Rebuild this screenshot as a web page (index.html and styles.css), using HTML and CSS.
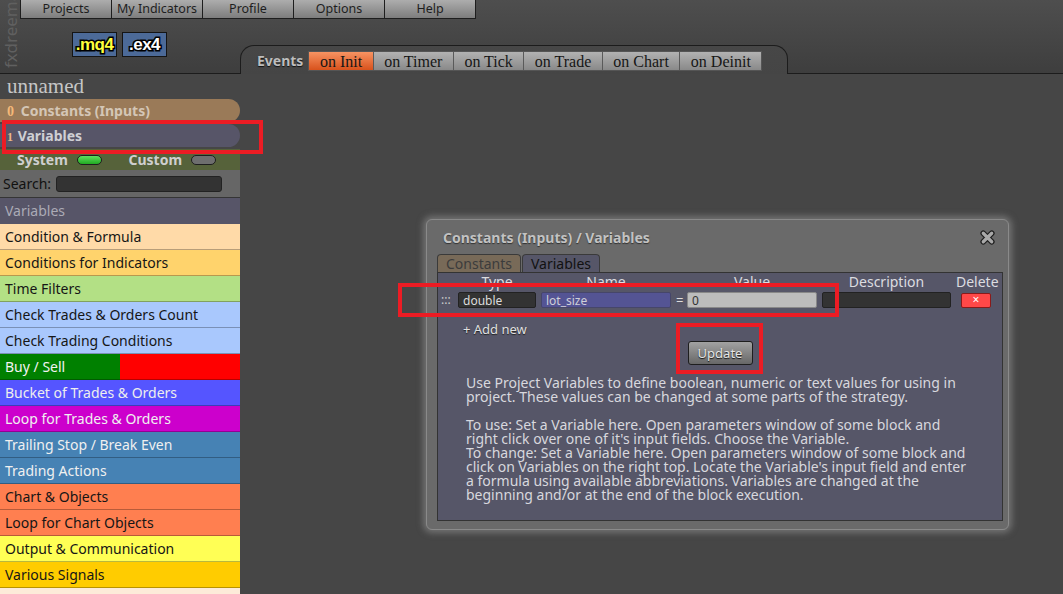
FILE: index.html
```html
<!DOCTYPE html>
<html lang="en">
<head>
    <meta charset="UTF-8">
    <title>fxDreema - unnamed</title>
    <link rel="stylesheet" href="styles.css">
</head>
<body>
    <header class="topbar">
        <div class="logo">fxdreema</div>
        <div class="topbar-main">
            <nav class="menu">
                <div class="menu-item">Projects</div>
                <div class="menu-item">My Indicators</div>
                <div class="menu-item">Profile</div>
                <div class="menu-item">Options</div>
                <div class="menu-item">Help</div>
            </nav>
            <div class="toolbar">
                <div class="exports">
                    <span class="export export-mq4">.mq4</span>
                    <span class="export export-ex4">.ex4</span>
                </div>
                <div class="events">
                    <span class="events-label">Events</span>
                    <div class="event-tabs">
                        <span class="event-tab active">on Init</span>
                        <span class="event-tab">on Timer</span>
                        <span class="event-tab">on Tick</span>
                        <span class="event-tab">on Trade</span>
                        <span class="event-tab">on Chart</span>
                        <span class="event-tab">on Deinit</span>
                    </div>
                </div>
            </div>
        </div>
    </header>

    <div class="workspace">
        <aside class="sidebar">
            <div class="project-name">unnamed</div>
            <div class="pill pill-constants"><span class="pill-count">0</span> Constants (Inputs)</div>
            <div class="pill pill-variables"><span class="pill-count">1</span> Variables</div>
            <div class="filter-row">
                <span class="filter">System <span class="toggle on"></span></span>
                <span class="filter">Custom <span class="toggle"></span></span>
            </div>
            <div class="search-row">
                <span>Search:</span>
                <span class="search-box"></span>
            </div>
            <div class="group-head">Variables</div>
            <ul class="blocks">
                <li class="block b-formula">Condition &amp; Formula</li>
                <li class="block b-indicators">Conditions for Indicators</li>
                <li class="block b-time">Time Filters</li>
                <li class="block b-check">Check Trades &amp; Orders Count</li>
                <li class="block b-check">Check Trading Conditions</li>
                <li class="block b-buysell">Buy / Sell</li>
                <li class="block b-bucket">Bucket of Trades &amp; Orders</li>
                <li class="block b-loop">Loop for Trades &amp; Orders</li>
                <li class="block b-steel">Trailing Stop / Break Even</li>
                <li class="block b-steel">Trading Actions</li>
                <li class="block b-coral">Chart &amp; Objects</li>
                <li class="block b-coral">Loop for Chart Objects</li>
                <li class="block b-output">Output &amp; Communication</li>
                <li class="block b-signals">Various Signals</li>
                <li class="block b-misc"></li>
            </ul>
        </aside>

        <main class="canvas">
            <div class="dialog">
                <div class="dialog-title">
                    <span>Constants (Inputs) / Variables</span>
                    <svg class="dialog-close" width="17" height="17" viewBox="0 0 18 18">
                        <path d="M4.5 4.5 L13.5 13.5 M13.5 4.5 L4.5 13.5" stroke="#1e1e1e" stroke-width="6" stroke-linecap="round"/>
                        <path d="M4.5 4.5 L13.5 13.5 M13.5 4.5 L4.5 13.5" stroke="#a9a9a9" stroke-width="3.4" stroke-linecap="round"/>
                    </svg>
                </div>
                <div class="dialog-tabs">
                    <span class="dialog-tab">Constants</span>
                    <span class="dialog-tab current">Variables</span>
                </div>
                <div class="dialog-panel">
                    <div class="var-grid">
                        <span></span>
                        <span class="col-head">Type</span>
                        <span class="col-head">Name</span>
                        <span></span>
                        <span class="col-head">Value</span>
                        <span class="col-head">Description</span>
                        <span class="col-head">Delete</span>

                        <span class="drag">:::</span>
                        <input class="field field-type" value="double">
                        <input class="field field-name" value="lot_size">
                        <span class="equals">=</span>
                        <input class="field field-value" value="0">
                        <input class="field field-desc" value="">
                        <span class="delete-cell"><span class="delete-btn">×</span></span>
                    </div>
                    <div class="add-new">+ Add new</div>
                    <div class="update-row"><span class="update-btn">Update</span></div>
                    <div class="help">
                        <p>Use Project Variables to define boolean, numeric or text values for using in project. These values can be changed at some parts of the strategy.</p>
                        <p>To use: Set a Variable here. Open parameters window of some block and right click over one of it's input fields. Choose the Variable.<br>To change: Set a Variable here. Open parameters window of some block and click on Variables on the right top. Locate the Variable's input field and enter a formula using available abbreviations. Variables are changed at the beginning and/or at the end of the block execution.</p>
                    </div>
                </div>
            </div>
        </main>

        <!-- red marks drawn over the screenshot -->
        <div class="mark mark-variables"></div>
        <div class="mark mark-row"></div>
        <div class="mark mark-update"></div>
    </div>
</body>
</html>
```

FILE: styles.css
```css
html, body {
    margin: 0;
    padding: 0;
}

body {
    width: 1063px;
    height: 594px;
    overflow: hidden;
    background: #464646;
    font-family: "Noto Sans", "Open Sans", sans-serif;
    color: #ddd;
}

/* ---------- top bar ---------- */

.topbar {
    display: flex;
    height: 73px;
    border-bottom: 1px solid #1c1c1c;
    background: linear-gradient(#4e4e4e, #3e3e3e);
}

.logo {
    width: 18px;
    height: 68px;
    margin-left: 2px;
    overflow: hidden;
    writing-mode: vertical-rl;
    transform: rotate(180deg);
    font-size: 17px;
    line-height: 18px;
    color: #606060;
    white-space: nowrap;
}

.topbar-main {
    display: flex;
    flex-direction: column;
}

.menu {
    display: flex;
    height: 18px;
    border: 1px solid #1e1e1e;
    border-top: 0;
    width: fit-content;
}

.menu-item {
    width: 90px;
    border-left: 1px solid #1e1e1e;
    background: linear-gradient(#adadad, #7d7d7d);
    color: #1e1e1e;
    font-size: 12.5px;
    line-height: 18px;
    text-align: center;
}

.menu-item:first-child {
    border-left: 0;
}

.toolbar {
    display: flex;
    align-items: flex-start;
}

.exports {
    display: flex;
    gap: 5px;
    width: 220px;
    box-sizing: border-box;
    padding-left: 52px;
    margin-top: 13px;
}

.export {
    width: 45px;
    height: 25px;
    box-sizing: border-box;
    border: 1px solid #151515;
    background: #4c6a98;
    font-family: "Liberation Sans", Arial, sans-serif;
    font-weight: bold;
    font-size: 17px;
    line-height: 23px;
    text-align: center;
    letter-spacing: -0.5px;
    -webkit-text-stroke: 3px #000;
    paint-order: stroke fill;
}

.export-mq4 { color: #ffff3c; }
.export-ex4 { color: #fff; }

.events {
    display: flex;
    align-items: flex-start;
    width: 548px;
    height: 29px;
    box-sizing: border-box;
    margin-top: 26px;
    margin-bottom: -1px;
    padding: 5px 15px 0 16px;
    border: 1px solid #1c1c1c;
    border-bottom: 0;
    border-radius: 14px 14px 0 0;
    background: linear-gradient(#474747, #454545);
    white-space: nowrap;
}

.events-label {
    flex: none;
    font-weight: bold;
    font-size: 14px;
    line-height: 20px;
    color: #bdbdbd;
    text-shadow: 0 1px 1px #111;
}

.event-tabs {
    display: flex;
    flex: none;
    margin-left: 5px;
    border: 1px solid #555;
}

.event-tab {
    flex: none;
    padding: 0 10.5px;
    height: 18px;
    border-left: 1px solid #5a5a5a;
    background: linear-gradient(#b2b2b2, #898989);
    font-family: "Liberation Serif", "DejaVu Serif", serif;
    font-size: 16px;
    line-height: 19px;
    color: #161616;
}

.event-tab:first-child {
    border-left: 0;
}

.event-tab.active {
    background: linear-gradient(#f79362, #d8521c);
}

/* ---------- workspace ---------- */

.workspace {
    position: relative;
    display: flex;
    height: 520px;
}

.sidebar {
    width: 240px;
    flex: none;
}

.project-name {
    height: 25px;
    padding-left: 7px;
    font-family: "Liberation Serif", "DejaVu Serif", serif;
    font-size: 21px;
    line-height: 25px;
    color: #c6c6c6;
}

.pill {
    height: 23px;
    margin-bottom: 2px;
    padding-left: 7px;
    border-radius: 0 12px 12px 0;
    font-weight: bold;
    font-size: 14px;
    line-height: 23px;
}

.pill-count {
    font-family: "Liberation Serif", "DejaVu Serif", serif;
    font-weight: bold;
    font-size: 14px;
    margin-right: 3px;
}

.pill-constants {
    background: #9a7a58;
    color: #d4c6b6;
}

.pill-constants .pill-count { color: #f4b878; }

.pill-variables {
    background: #575568;
    color: #cfcfd4;
}

.pill-variables .pill-count { color: #e8b888; font-size: 12px; margin-right: 1px; }

.filter-row {
    display: flex;
    height: 21px;
    padding-left: 17px;
    background: #56623a;
    font-weight: bold;
    font-size: 14px;
    line-height: 21px;
    color: #cfcfcf;
}

.filter {
    display: flex;
    align-items: center;
    gap: 9px;
    width: 119px;
}

.toggle {
    width: 23px;
    height: 8px;
    border: 1px solid #1e1e1e;
    border-radius: 5px;
    background: #6e6e6e;
}

.toggle.on {
    background: linear-gradient(#5de05d, #22aa22);
}

.search-row {
    display: flex;
    align-items: center;
    gap: 5px;
    height: 27px;
    padding-left: 3px;
    background: #666;
    border-bottom: 1px solid #353535;
    font-size: 14px;
    color: #111;
}

.search-box {
    width: 164px;
    height: 14px;
    border: 1px solid #222;
    border-radius: 3px;
    background: #333;
}

.group-head {
    height: 26px;
    padding-left: 5px;
    background: #575568;
    font-size: 14px;
    line-height: 26px;
    color: #ababb6;
}

.blocks {
    margin: 0;
    padding: 0;
    list-style: none;
}

.block {
    height: 25px;
    padding-left: 5px;
    border-bottom: 1px solid rgba(0, 0, 0, 0.28);
    font-size: 14px;
    line-height: 26px;
    color: #161616;
}

.b-formula    { background: #ffdaa8; }
.b-indicators { background: #ffd36c; }
.b-time       { background: #b3e085; }
.b-check      { background: #a9c8fd; }
.b-buysell    { background: linear-gradient(90deg, #008000 120px, #ff0000 120px); color: #f2f2f2; }
.b-bucket     { background: #5555ff; color: #eee; }
.b-loop       { background: #cc00cc; color: #f0f0f0; }
.b-steel      { background: #4682b4; color: #f0f0f0; }
.b-coral      { background: #ff7f50; }
.b-output     { background: #ffff55; }
.b-signals    { background: #ffcc00; }
.b-misc       { background: #fdebd9; }

.canvas {
    position: relative;
    flex: 1;
}

/* ---------- dialog ---------- */

.dialog {
    position: absolute;
    left: 186px;
    top: 145px;
    width: 583px;
    height: 311px;
    box-sizing: border-box;
    padding: 0 5px 8px 10px;
    display: flex;
    flex-direction: column;
    border: 1px solid #8a8a8a;
    border-radius: 6px;
    background: #6a6a6a;
    box-shadow: 0 0 6px 3px rgba(150, 150, 150, 0.55);
}

.dialog-title {
    display: flex;
    align-items: center;
    justify-content: space-between;
    height: 34px;
    padding: 0 7px 0 6px;
    font-weight: bold;
    font-size: 14px;
    color: #c2c2c2;
    text-shadow: 0 1px 1px #333;
}

.dialog-tabs {
    display: flex;
    gap: 1px;
    height: 18px;
}

.dialog-tab {
    padding: 0 8px;
    border: 1px solid #3a3a3a;
    border-bottom: 0;
    border-radius: 4px 4px 0 0;
    background: #786a58;
    font-size: 14px;
    line-height: 18px;
    color: #3c3c3c;
}

.dialog-tab.current {
    background: #565668;
    color: #111;
}

.dialog-panel {
    flex: 1;
    border: 1px solid #333;
    background: #565668;
}

.var-grid {
    display: grid;
    grid-template-columns: 12px 78px 130px 6px 130px 129px 40px;
    column-gap: 5px;
    row-gap: 1px;
    align-items: center;
    padding: 0 0 0 3px;
}

.col-head {
    font-size: 14px;
    line-height: 17px;
    text-align: center;
    color: #dcdce0;
}

.drag {
    font-size: 12px;
    color: #ccc;
    line-height: 16px;
}

.equals {
    font-size: 13px;
    color: #ddd;
}

.field {
    height: 16px;
    box-sizing: border-box;
    margin: 0;
    padding: 0 4px;
    border: 1px solid #222;
    border-radius: 2px;
    font-family: "Noto Sans", sans-serif;
    font-size: 12px;
    color: #dcdcdc;
    background: #333;
}

.field-name {
    background: #545494;
    border-color: #46466a;
    color: #cfcfd8;
}

.field-value {
    background: #bcbcbc;
    border-color: #888;
    color: #333;
}

.delete-cell {
    padding-left: 5px;
}

.delete-btn {
    display: block;
    width: 30px;
    height: 15px;
    box-sizing: border-box;
    border: 1px solid #8a1a1a;
    border-radius: 2px;
    background: #ff4848;
    font-size: 12px;
    line-height: 12px;
    text-align: center;
    color: #fff;
}

.add-new {
    margin-top: 11px;
    padding-left: 25px;
    font-size: 13px;
    color: #e0e0e0;
    text-shadow: 0 1px 1px #222;
}

.update-row {
    display: flex;
    justify-content: center;
    margin-top: 3px;
}

.update-btn {
    width: 65px;
    height: 24px;
    box-sizing: border-box;
    border: 1px solid #1e1e1e;
    border-radius: 3px;
    background: linear-gradient(#a2a2a2, #676767);
    font-size: 13px;
    line-height: 22px;
    text-align: center;
    color: #e6e6e6;
    text-shadow: 0 1px 1px #111;
}

.help {
    width: 505px;
    margin-top: 11px;
    padding-left: 28px;
    font-size: 14px;
    line-height: 14px;
    color: #d8d8de;
}

.help p {
    margin: 0 0 14px 0;
}

/* ---------- red annotation frames ---------- */

.mark {
    position: absolute;
    border: 4px solid #ec1c24;
    box-sizing: border-box;
}

.mark-variables {
    left: 2px;
    top: 46px;
    width: 261px;
    height: 34px;
}

.mark-row {
    left: 398px;
    top: 209px;
    width: 441px;
    height: 34px;
}

.mark-update {
    left: 676px;
    top: 249px;
    width: 87px;
    height: 51px;
}
```
